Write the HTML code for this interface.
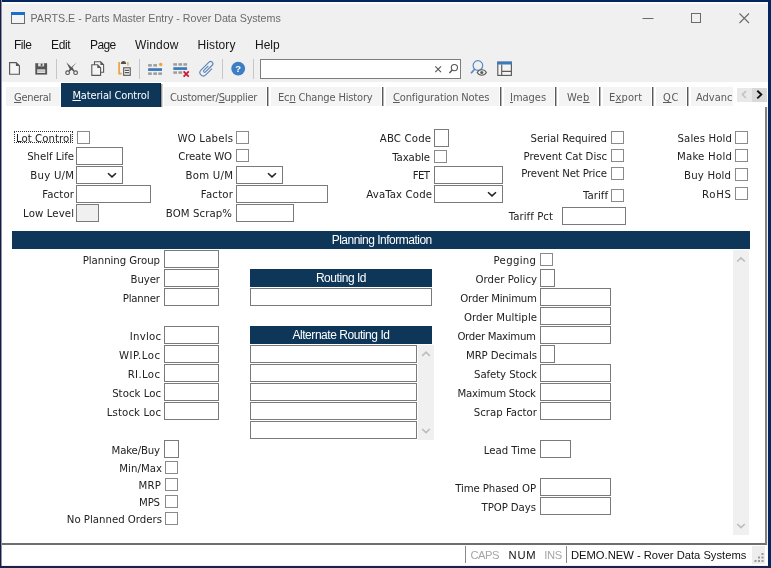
<!DOCTYPE html>
<html lang="en">
<head>
<meta charset="utf-8">
<title>PARTS.E - Parts Master Entry - Rover Data Systems</title>
<style>
html,body{margin:0;padding:0;}
body{width:771px;height:568px;overflow:hidden;background:#03265e;position:relative;
  font-family:"Liberation Sans",sans-serif;color:#222;}
*{box-sizing:border-box;}
.abs{position:absolute;}
#edgeL{left:0;top:0;width:2px;height:568px;background:#171c3e;border-right:1px solid #8c92aa;}
#edgeB{left:0;top:566px;width:771px;height:2px;background:#1a2246;}
#win{left:2px;top:2px;width:766px;height:564px;background:#f0f0f0;overflow:hidden;}
/* everything inside #win uses page coordinates shifted by (2,2) via this wrapper */
#pg{left:-2px;top:-2px;width:771px;height:568px;will-change:transform;}
.t{position:absolute;white-space:pre;line-height:1;}
/* title */
#title{left:30.5px;top:12.7px;font-size:10.7px;color:#6a6a6a;}
.menu{top:39.4px;font-size:12px;color:#161616;}
/* tab strip */
#strip{left:2px;top:82px;width:766px;height:25px;background:#fff;}
.tab{position:absolute;top:87px;height:19px;background:#f4f4f4;}
.tl{top:92px;font-size:11px;letter-spacing:-0.2px;color:#5a5a5a;font-family:"DejaVu Sans Condensed","Liberation Sans",sans-serif;}
.tsep{position:absolute;top:87px;height:19px;width:2px;background:#5a5a5a;border-right:1px solid #b8b8b8;}
u{text-decoration:underline;text-underline-offset:1px;}
/* content */
#panel{left:2px;top:107px;width:765px;height:438px;background:#fff;border-right:2px solid #828282;border-bottom:2px solid #6e6e6e;}
.lb{position:absolute;white-space:pre;line-height:1;font-size:11.3px;color:#222;text-align:right;
  font-family:"DejaVu Sans Condensed","Liberation Sans",sans-serif;}
.in{position:absolute;height:18px;background:#fff;border:1px solid #7a7a7a;}
.cb{position:absolute;width:13px;height:13px;background:#fff;border:1px solid #8a8a8a;}
.hd{position:absolute;height:18px;background:#0d3658;color:#fff;font-size:12px;line-height:18px;text-align:center;white-space:pre;letter-spacing:-0.45px;}
.sb{position:absolute;background:#f0f0f0;}
/* status */
#status{left:2px;top:545px;width:766px;height:20px;background:#fff;}
.st{top:549.6px;font-size:11.2px;}
</style>
</head>
<body>
<div id="edgeL" class="abs"></div>
<div id="edgeB" class="abs"></div>
<div id="win" class="abs"><div id="pg" class="abs">

<!-- title bar -->
<div class="abs" style="left:2px;top:2px;width:766px;height:2px;background:#fbfbfb"></div>
<svg class="abs" style="left:10px;top:11px" width="16" height="14" viewBox="0 0 16 14"><rect x="1.5" y="1.5" width="13" height="11" fill="#f4f4f4" stroke="#6b6b6b" stroke-width="1"/><rect x="1" y="1" width="14" height="3" fill="#1b6fc8"/></svg>
<div id="title" class="t">PARTS.E - Parts Master Entry - Rover Data Systems</div>
<svg class="abs" style="left:640px;top:10px" width="112" height="16" viewBox="0 0 112 16">
  <path d="M2.5 8.5H13.5" stroke="#6a6a6a" stroke-width="1" fill="none"/>
  <rect x="51.5" y="3.5" width="9" height="9" stroke="#6a6a6a" stroke-width="1" fill="none"/>
  <path d="M99.5 3.5L109 13M109 3.5L99.5 13" stroke="#6a6a6a" stroke-width="1.1" fill="none"/>
</svg>

<!-- menu -->
<div class="t menu" style="left:14px;letter-spacing:-0.5px">File</div>
<div class="t menu" style="left:51px;letter-spacing:-0.35px">Edit</div>
<div class="t menu" style="left:90px;letter-spacing:-0.6px">Page</div>
<div class="t menu" style="left:135px;letter-spacing:0.15px">Window</div>
<div class="t menu" style="left:197.5px;letter-spacing:0.1px">History</div>
<div class="t menu" style="left:255px">Help</div>

<!-- TOOLBAR -->
<div id="toolbar">
<div class="abs" style="left:56px;top:59px;width:1px;height:20px;background:#c6c6c6"></div>
<div class="abs" style="left:139px;top:59px;width:1px;height:20px;background:#c6c6c6"></div>
<div class="abs" style="left:222px;top:59px;width:1px;height:20px;background:#c6c6c6"></div>
<div class="abs" style="left:253px;top:59px;width:1px;height:20px;background:#c6c6c6"></div>
<div class="abs" style="left:260px;top:59px;width:201px;height:20px;background:#fff;border:1px solid #7d7d7d"></div>
<svg class="abs" style="left:0;top:56px" width="771" height="26" viewBox="0 56 771 26">
<!-- new -->
<path d="M9.6 62.6H16.2L19.4 65.8V74.2H9.6Z" fill="#f5f5f5" stroke="#585858" stroke-width="1.15"/>
<path d="M15.9 62.4L19.6 66.1H15.9Z" fill="#585858"/>
<!-- save -->
<rect x="35.3" y="63.2" width="11.8" height="11.4" fill="#565656"/>
<rect x="38.1" y="63.2" width="6" height="3.1" fill="#e4e4e4"/>
<rect x="40.7" y="63.7" width="1.8" height="2.2" fill="#565656"/>
<rect x="37.2" y="69.4" width="8" height="3.5" fill="#f1f1f1"/>
<rect x="37.2" y="70.6" width="8" height="0.9" fill="#9a9a9a"/>
<!-- cut -->
<path d="M66.2 62.2L72.9 68.4L74.6 70.9L73.5 71.6L69.4 68.3Z" fill="#565656"/>
<path d="M76.6 62.4L69.9 68.6L68.4 70.9L69.5 71.6L73.4 68.4L72.3 67.4Z" fill="#565656"/>
<circle cx="67.6" cy="72.7" r="1.85" fill="#f0f0f0" stroke="#565656" stroke-width="1.15"/>
<circle cx="75.6" cy="72.7" r="1.85" fill="#f0f0f0" stroke="#565656" stroke-width="1.15"/>
<!-- copy -->
<path d="M94.5 61.8H100.7L103.6 64.7V72.3H94.5Z" fill="#f4f4f4" stroke="#585858" stroke-width="1.1"/>
<path d="M100.4 61.6L103.8 65H100.4Z" fill="#585858"/>
<path d="M91.8 64.7H97.6L100.6 67.7V75.4H91.8Z" fill="#f4f4f4" stroke="#585858" stroke-width="1.1"/>
<path d="M97.3 64.5L100.8 68H97.3Z" fill="#585858"/>
<!-- paste -->
<path d="M119.1 62V73.6H121.7" fill="none" stroke="#eba43c" stroke-width="1.7"/>
<path d="M127.9 62.1V65.4" fill="none" stroke="#eba43c" stroke-width="1.3"/>
<path d="M120.8 63.9C120.8 60 126.2 60 126.2 63.9Z" fill="#505050"/>
<rect x="123.7" y="67.8" width="6.5" height="7.5" fill="#fafafa" stroke="#565656" stroke-width="1.15"/>
<path d="M124.9 70.4H129M124.9 72.6H129" stroke="#565656" stroke-width="1.2"/>
<!-- insert row -->
<g fill="#9c9c9c"><rect x="148.1" y="64.1" width="3.7" height="2.5"/><rect x="153.3" y="64.1" width="3.7" height="2.5"/>
<rect x="148.1" y="72.4" width="3.7" height="2.5"/><rect x="153.3" y="72.4" width="3.7" height="2.5"/><rect x="158.3" y="72.4" width="3.7" height="2.5"/></g>
<circle cx="160.7" cy="64.4" r="1.75" fill="#eaa346"/>
<rect x="148.1" y="68.2" width="13.9" height="2.75" fill="#3d7abc"/>
<!-- delete row -->
<g fill="#9c9c9c"><rect x="173.3" y="63.2" width="3.7" height="2.5"/><rect x="178.4" y="63.2" width="3.7" height="2.5"/><rect x="183.4" y="63.2" width="3.7" height="2.5"/>
<rect x="173.3" y="71.3" width="3.7" height="2.5"/><rect x="178.4" y="71.3" width="3.7" height="2.5"/></g>
<rect x="173.3" y="67.2" width="13.8" height="2.75" fill="#3d7abc"/>
<path d="M183.6 71.4L188.8 76.6M188.8 71.4L183.6 76.6" stroke="#d0163d" stroke-width="1.8" fill="none"/>
<!-- paperclip -->
<g transform="translate(207 68.9) rotate(45) translate(-3.4 -9.15)"><path d="M6.8 5.5V14.3A3.4 3.4 0 0 1 0 14.3V2.9A2.25 2.25 0 0 1 4.5 2.9V12.4A1.15 1.15 0 0 1 2.2 12.4V6" fill="none" stroke="#5a82b8" stroke-width="1.1"/></g>
<!-- help -->
<circle cx="238.2" cy="68.6" r="6.9" fill="#3c7dc3"/>
<text x="238.2" y="72.1" font-family="Liberation Sans, sans-serif" font-weight="bold" font-size="9.5" fill="#fff" text-anchor="middle">?</text>
<!-- search glyphs -->
<path d="M435.3 66.4L441 72.1M441 66.4L435.3 72.1" stroke="#555" stroke-width="1.1" fill="none"/>
<circle cx="454.4" cy="67.6" r="3.1" fill="none" stroke="#555" stroke-width="1.1"/>
<path d="M452.2 70L449.4 73" stroke="#555" stroke-width="1.35" fill="none"/>
<!-- find/eye -->
<circle cx="477.9" cy="65.5" r="4.8" fill="none" stroke="#5687c6" stroke-width="1.2"/>
<path d="M474.6 69.2L471 73.3" stroke="#5687c6" stroke-width="1.7" fill="none"/>
<path d="M477.2 72.5C479.2 68.9 484.4 68.9 486.4 72.5C484.4 76.1 479.2 76.1 477.2 72.5Z" fill="#f0f0f0" stroke="#5b5b5b" stroke-width="1.1"/>
<circle cx="481.8" cy="72.5" r="1.55" fill="#5b5b5b"/>
<!-- layout -->
<rect x="497.8" y="62.2" width="13.6" height="13.2" fill="#f4f4f4" stroke="#5b5b5b" stroke-width="1.15"/>
<rect x="497.2" y="61.6" width="14.8" height="2.9" fill="#3d7abc"/>
<path d="M501.7 64.5V75.4M501.7 71.3H511.4" stroke="#5b5b5b" stroke-width="1.15" fill="none"/>
</svg>
</div>

<!-- TABS -->
<div id="strip" class="abs"></div>
<div id="tabs">
<div class="tab" style="left:6px;width:54px"></div>
<div class="t tl" style="left:14.0px;letter-spacing:-0.28px"><u>G</u>eneral</div>
<div class="abs" style="left:61px;top:83px;width:100px;height:24px;background:#0d3658;border-right:1px solid #0a2440"></div>
<div class="abs" style="left:161px;top:84px;width:2px;height:23px;background:#9a9a9a;border-right:1px solid #d4d4d4"></div>
<div class="t tl" style="left:72.4px;letter-spacing:-0.14px;color:#fff;top:90px"><u>M</u>aterial Control</div>
<div class="tab" style="left:164px;width:102px"></div>
<div class="t tl" style="left:170.0px;letter-spacing:-0.31px">Customer/<u>S</u>upplier</div>
<div class="tsep" style="left:267px"></div>
<div class="tab" style="left:271px;width:110px"></div>
<div class="t tl" style="left:278.0px;letter-spacing:-0.16px">Ec<u>n</u> Change History</div>
<div class="tsep" style="left:382px"></div>
<div class="tab" style="left:386px;width:113px"></div>
<div class="t tl" style="left:393.0px;letter-spacing:-0.14px"><u>C</u>onfiguration Notes</div>
<div class="tsep" style="left:500px"></div>
<div class="tab" style="left:504px;width:50px"></div>
<div class="t tl" style="left:510.0px;letter-spacing:-0.02px"><u>I</u>mages</div>
<div class="tsep" style="left:555px"></div>
<div class="tab" style="left:559px;width:38px"></div>
<div class="t tl" style="left:567.0px;letter-spacing:0.36px">We<u>b</u></div>
<div class="tsep" style="left:598.5px"></div>
<div class="tab" style="left:603px;width:48px"></div>
<div class="t tl" style="left:609.0px;letter-spacing:0.16px">E<u>x</u>port</div>
<div class="tsep" style="left:652px"></div>
<div class="tab" style="left:656px;width:30px"></div>
<div class="t tl" style="left:663.0px;letter-spacing:0.7px"><u>Q</u>C</div>
<div class="tsep" style="left:687px"></div>
<div class="tab" style="left:691px;width:42px;overflow:hidden"><div class="t tl" style="left:5px;top:5px;letter-spacing:0">Advanced</div></div>
<div class="abs" style="left:737px;top:88px;width:15px;height:14px;background:#e9e9e9"></div>
<div class="abs" style="left:752px;top:88px;width:15px;height:14px;background:#d9d9d9"></div>
<svg class="abs" style="left:737px;top:88px" width="30" height="14" viewBox="0 0 30 14"><path d="M9 3.2L5.4 6.6L9 10" fill="none" stroke="#c2c2c2" stroke-width="1.6"/><path d="M20.3 2.8L24.3 6.6L20.3 10.4" fill="none" stroke="#111" stroke-width="1.9"/></svg>
</div>

<!-- PANEL -->
<div id="panel" class="abs"></div>
<div id="form">
<div class="abs" style="left:14px;top:131px;width:59px;height:12px;border:1px dotted #333"></div>
<div class="lb" id="L0" style="right:698.95px;top:133px;letter-spacing:0.05px">Lot Control</div>
<div class="cb" style="left:77px;top:131px"></div>
<div class="lb" id="L1" style="right:697.03px;top:151px;letter-spacing:-0.03px">Shelf Life</div>
<div class="in" style="left:76px;top:147px;width:47px;height:18px"></div>
<div class="lb" id="L2" style="right:696.77px;top:170px;letter-spacing:0.23px">Buy U/M</div>
<div class="in" style="left:76px;top:166px;width:47px;height:18px"></div>
<svg class="abs" style="left:107.4px;top:172.4px" width="10" height="7" viewBox="0 0 10 7"><path d="M1 1.2L5 4.9L9 1.2" fill="none" stroke="#222" stroke-width="1.5"/></svg>
<div class="lb" id="L3" style="right:696.86px;top:189px;letter-spacing:0.14px">Factor</div>
<div class="in" style="left:76px;top:185px;width:75px;height:18px"></div>
<div class="lb" id="L4" style="right:696.89px;top:208px;letter-spacing:0.11px">Low Level</div>
<div class="in" style="left:76px;top:204px;width:23px;height:18px;background:#f0f0f0"></div>
<div class="lb" id="L5" style="right:537.8px;top:133px;letter-spacing:0.2px">WO Labels</div>
<div class="cb" style="left:236px;top:131px"></div>
<div class="lb" id="L6" style="right:539.17px;top:151px;letter-spacing:-0.17px">Create WO</div>
<div class="cb" style="left:236px;top:149px"></div>
<div class="lb" id="L7" style="right:537.74px;top:170px;letter-spacing:0.26px">Bom U/M</div>
<div class="in" style="left:236px;top:166px;width:47px;height:18px"></div>
<svg class="abs" style="left:267.4px;top:172.4px" width="10" height="7" viewBox="0 0 10 7"><path d="M1 1.2L5 4.9L9 1.2" fill="none" stroke="#222" stroke-width="1.5"/></svg>
<div class="lb" id="L8" style="right:537.77px;top:189px;letter-spacing:0.23px">Factor</div>
<div class="in" style="left:236px;top:185px;width:92px;height:18px"></div>
<div class="lb" id="L9" style="right:538.9px;top:208px;letter-spacing:0.1px">BOM Scrap%</div>
<div class="in" style="left:236px;top:204px;width:58px;height:18px"></div>
<div class="lb" id="L10" style="right:339.84px;top:133px;letter-spacing:0.16px">ABC Code</div>
<div class="in" style="left:434px;top:129px;width:15px;height:18px"></div>
<div class="lb" id="L11" style="right:341.11px;top:152px;letter-spacing:-0.11px">Taxable</div>
<div class="cb" style="left:434px;top:150px"></div>
<div class="lb" id="L12" style="right:341.56px;top:170px;letter-spacing:-0.56px">FET</div>
<div class="in" style="left:434px;top:166px;width:69px;height:18px"></div>
<div class="lb" id="L13" style="right:338.87px;top:189px;letter-spacing:0.13px">AvaTax Code</div>
<div class="in" style="left:434px;top:185px;width:69px;height:18px"></div>
<svg class="abs" style="left:487.4px;top:191.4px" width="10" height="7" viewBox="0 0 10 7"><path d="M1 1.2L5 4.9L9 1.2" fill="none" stroke="#222" stroke-width="1.5"/></svg>
<div class="lb" id="L14" style="right:164.05px;top:133px;letter-spacing:-0.05px">Serial Required</div>
<div class="cb" style="left:611px;top:131px"></div>
<div class="lb" id="L15" style="right:164.04px;top:151px;letter-spacing:-0.04px">Prevent Cat Disc</div>
<div class="cb" style="left:611px;top:149px"></div>
<div class="lb" id="L16" style="right:164.13px;top:168px;letter-spacing:-0.13px">Prevent Net Price</div>
<div class="cb" style="left:611px;top:167px"></div>
<div class="lb" id="L17" style="right:162.96px;top:190px;letter-spacing:0.04px">Tariff</div>
<div class="cb" style="left:611px;top:189px"></div>
<div class="lb" id="L18" style="right:217.93px;top:211px;letter-spacing:0.07px">Tariff Pct</div>
<div class="in" style="left:562px;top:207px;width:64px;height:18px"></div>
<div class="lb" id="L19" style="right:38.88px;top:133px;letter-spacing:0.12px">Sales Hold</div>
<div class="cb" style="left:735px;top:131px"></div>
<div class="lb" id="L20" style="right:38.75px;top:151px;letter-spacing:0.25px">Make Hold</div>
<div class="cb" style="left:735px;top:149px"></div>
<div class="lb" id="L21" style="right:39.84px;top:170px;letter-spacing:0.16px">Buy Hold</div>
<div class="cb" style="left:735px;top:168px"></div>
<div class="lb" id="L22" style="right:39.32px;top:189px;letter-spacing:0.68px">RoHS</div>
<div class="cb" style="left:735px;top:187px"></div>
<div class="hd" style="left:12px;top:231px;width:738px;padding-left:1.4px;letter-spacing:-0.5px">Planning Information</div>
<div class="lb" id="L23" style="right:611.05px;top:255px;letter-spacing:-0.05px">Planning Group</div>
<div class="in" style="left:164px;top:250px;width:55px;height:18px"></div>
<div class="lb" id="L24" style="right:611.11px;top:274px;letter-spacing:-0.11px">Buyer</div>
<div class="in" style="left:164px;top:269px;width:55px;height:18px"></div>
<div class="lb" id="L25" style="right:611.22px;top:293px;letter-spacing:-0.22px">Planner</div>
<div class="in" style="left:164px;top:288px;width:55px;height:18px"></div>
<div class="lb" id="L26" style="right:609.77px;top:331px;letter-spacing:0.23px">Invloc</div>
<div class="in" style="left:164px;top:326px;width:55px;height:18px"></div>
<div class="lb" id="L27" style="right:610.47px;top:350px;letter-spacing:0.53px">WIP.Loc</div>
<div class="in" style="left:164px;top:345px;width:55px;height:18px"></div>
<div class="lb" id="L28" style="right:610.64px;top:369px;letter-spacing:0.36px">RI.Loc</div>
<div class="in" style="left:164px;top:364px;width:55px;height:18px"></div>
<div class="lb" id="L29" style="right:609.97px;top:388px;letter-spacing:0.03px">Stock Loc</div>
<div class="in" style="left:164px;top:383px;width:55px;height:18px"></div>
<div class="lb" id="L30" style="right:609.87px;top:407px;letter-spacing:0.13px">Lstock Loc</div>
<div class="in" style="left:164px;top:402px;width:55px;height:18px"></div>
<div class="lb" id="L31" style="right:611.16px;top:445px;letter-spacing:-0.16px">Make/Buy</div>
<div class="in" style="left:164px;top:440px;width:15px;height:18px"></div>
<div class="lb" id="L32" style="right:608.96px;top:463px;letter-spacing:0.04px">Min/Max</div>
<div class="cb" style="left:165px;top:461px"></div>
<div class="lb" id="L33" style="right:609.77px;top:480px;letter-spacing:0.23px">MRP</div>
<div class="cb" style="left:165px;top:478px"></div>
<div class="lb" id="L34" style="right:611.23px;top:497px;letter-spacing:-0.23px">MPS</div>
<div class="cb" style="left:165px;top:495px"></div>
<div class="lb" id="L35" style="right:609.0px;top:514px">No Planned Orders</div>
<div class="cb" style="left:165px;top:512px"></div>
<div class="hd" style="left:250px;top:269px;width:182px">Routing Id</div>
<div class="in" style="left:250px;top:288px;width:182px;height:18px"></div>
<div class="hd" style="left:250px;top:326px;width:182px">Alternate Routing Id</div>
<div class="in" style="left:250px;top:345px;width:167px;height:18px"></div>
<div class="in" style="left:250px;top:364px;width:167px;height:18px"></div>
<div class="in" style="left:250px;top:383px;width:167px;height:18px"></div>
<div class="in" style="left:250px;top:402px;width:167px;height:18px"></div>
<div class="in" style="left:250px;top:421px;width:167px;height:18px"></div>
<div class="sb" style="left:418px;top:345px;width:16px;height:95px"></div>
<svg class="abs" style="left:418px;top:345px" width="16" height="95" viewBox="0 0 16 95"><path d="M4.2 10.8L8 7.2L11.8 10.8" fill="none" stroke="#bdbdbd" stroke-width="1.7"/><path d="M4.2 84L8 87.6L11.8 84" fill="none" stroke="#bdbdbd" stroke-width="1.7"/></svg>
<div class="lb" id="L36" style="right:234.7px;top:255px;letter-spacing:0.3px">Pegging</div>
<div class="cb" style="left:540px;top:253px"></div>
<div class="lb" id="L37" style="right:233.98px;top:274px;letter-spacing:0.02px">Order Policy</div>
<div class="in" style="left:540px;top:269px;width:15px;height:18px"></div>
<div class="lb" id="L38" style="right:234.21px;top:293px;letter-spacing:-0.21px">Order Minimum</div>
<div class="in" style="left:540px;top:288px;width:71px;height:18px"></div>
<div class="lb" id="L39" style="right:233.95px;top:312px;letter-spacing:0.05px">Order Multiple</div>
<div class="in" style="left:540px;top:307px;width:71px;height:18px"></div>
<div class="lb" id="L40" style="right:235.3px;top:331px;letter-spacing:-0.3px">Order Maximum</div>
<div class="in" style="left:540px;top:326px;width:71px;height:18px"></div>
<div class="lb" id="L41" style="right:234.08px;top:350px;letter-spacing:-0.08px">MRP Decimals</div>
<div class="in" style="left:540px;top:345px;width:15px;height:18px"></div>
<div class="lb" id="L42" style="right:234.08px;top:369px;letter-spacing:-0.08px">Safety Stock</div>
<div class="in" style="left:540px;top:364px;width:71px;height:18px"></div>
<div class="lb" id="L43" style="right:235.24px;top:388px;letter-spacing:-0.24px">Maximum Stock</div>
<div class="in" style="left:540px;top:383px;width:71px;height:18px"></div>
<div class="lb" id="L44" style="right:233.98px;top:407px;letter-spacing:0.02px">Scrap Factor</div>
<div class="in" style="left:540px;top:402px;width:71px;height:18px"></div>
<div class="lb" id="L45" style="right:235.03px;top:445px;letter-spacing:-0.03px">Lead Time</div>
<div class="in" style="left:540px;top:440px;width:31px;height:18px"></div>
<div class="lb" id="L46" style="right:235.12px;top:483px;letter-spacing:-0.12px">Time Phased OP</div>
<div class="in" style="left:540px;top:478px;width:71px;height:18px"></div>
<div class="lb" id="L47" style="right:235.08px;top:502px;letter-spacing:-0.08px">TPOP Days</div>
<div class="in" style="left:540px;top:497px;width:71px;height:18px"></div>
<div class="sb" style="left:733px;top:250px;width:16px;height:285px"></div>
<svg class="abs" style="left:733px;top:250px" width="16" height="285" viewBox="0 0 16 285"><path d="M4.2 11.5L8 7.9L11.8 11.5" fill="none" stroke="#bdbdbd" stroke-width="1.7"/><path d="M4.2 274L8 277.6L11.8 274" fill="none" stroke="#bdbdbd" stroke-width="1.7"/></svg>
</div>

<!-- STATUS -->
<div id="status" class="abs"></div>
<div id="statusitems">
<div class="abs" style="left:465px;top:546px;width:1px;height:17px;background:#8a8a8a"></div>
<div class="t st" style="left:470.5px;color:#a6a6a6;letter-spacing:-0.5px">CAPS</div>
<div class="t st" style="left:508.5px;color:#111;letter-spacing:0.8px">NUM</div>
<div class="t st" style="left:544.2px;color:#a6a6a6;letter-spacing:-0.3px">INS</div>
<div class="abs" style="left:565.5px;top:546px;width:1px;height:17px;background:#8a8a8a"></div>
<div class="t st" style="left:571px;color:#111">DEMO.NEW - Rover Data Systems</div>
<div class="abs" style="left:752px;top:546px;width:13px;height:18px;background:#ededed"></div>
<svg class="abs" style="left:752px;top:550px" width="14" height="14" viewBox="0 0 14 14"><g fill="#9a9a9a"><rect x="9.5" y="3" width="2" height="2"/><rect x="6" y="6.5" width="2" height="2"/><rect x="9.5" y="6.5" width="2" height="2"/><rect x="2.5" y="10" width="2" height="2"/><rect x="6" y="10" width="2" height="2"/><rect x="9.5" y="10" width="2" height="2"/></g></svg>
</div>

</div></div>
</body>
</html>
